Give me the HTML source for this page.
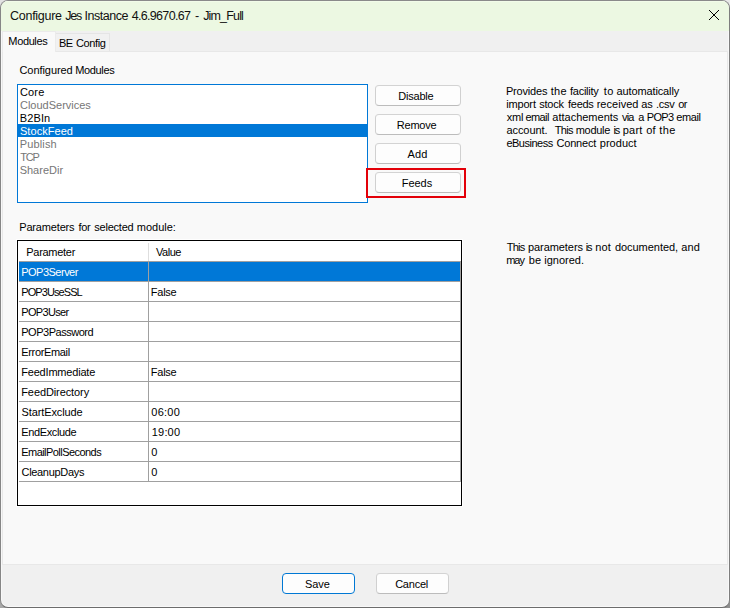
<!DOCTYPE html>
<html><head><meta charset="utf-8"><title>Configure Jes Instance</title>
<style>
html,body{margin:0;padding:0}
body{width:730px;height:608px;overflow:hidden;position:relative;background:linear-gradient(to bottom,#e6e6e6 0,#e6e6e6 304px,#a2a2a2 304px,#a2a2a2 608px);font-family:"Liberation Sans", sans-serif;}
.t{position:absolute;white-space:pre;line-height:14px;font-family:"Liberation Sans", sans-serif;}
.a{position:absolute;box-sizing:border-box}
#win{left:0;top:0;width:730px;height:608px;border:1px solid #8a8a8a;border-color:#8a8a8a #7e7e7e #6c6c6c #868686;box-shadow:inset 0 0 0 1px rgba(255,255,255,.55);border-radius:8px;background:#f0f0f0;overflow:hidden}
#tbar{left:0;top:0;width:728px;height:30px;background:#ecf8e2;border-top:1px solid #f2fce9}
#page{left:2px;top:51px;width:726px;height:514px;background:#f9f9f9;border:1px solid #e8e8e8}
#tabA{left:2px;top:31px;width:54px;height:21px;background:#f9f9f9;border:1px solid #ebebeb;border-bottom:none}
#tabB{left:55px;top:33px;width:55px;height:18px;background:#f1f1f1;border:1px solid #e5e5e5;border-bottom:none}
#list{left:17px;top:84px;width:351px;height:119px;background:#fff;border:1px solid #0078d7}
#sel{left:18px;top:124px;width:349px;height:13px;background:#0078d7}
.btn{width:86px;height:21px;left:375px;background:#fdfdfd;border:1px solid #d0d0d0;border-color:#d3d3d3 #d0d0d0 #bcbcbc #d0d0d0;border-radius:4px}
#red{left:366px;top:168px;width:100px;height:30px;border:2px solid #e30009}
#grid{left:17px;top:240px;width:445px;height:266px;background:#fff;border:1px solid #000;outline:1px solid #fff}
.hl{left:19px;width:442px;height:1px;background:#a0a0a0}
.vl{width:1px;background:#a0a0a0}
#gsel{left:19px;top:262px;width:441px;height:19px;background:#0078d7}
#bsave{left:282px;top:573px;width:73px;height:21px;background:#fdfdfd;border:1px solid #0078d4;border-radius:4px}
#bcancel{left:376px;top:573px;width:73px;height:21px;background:#fdfdfd;border:1px solid #d0d0d0;border-color:#d3d3d3 #d0d0d0 #bcbcbc #d0d0d0;border-radius:4px}
</style></head>
<body>
<div class="a" style="left:0;top:0;width:10px;height:10px;background:#e2e2e2"></div><div class="a" style="left:720px;top:0;width:10px;height:10px;background:#e8e8e8"></div><div class="a" style="left:0;top:598px;width:10px;height:10px;background:#a8a8a8"></div><div class="a" style="left:720px;top:598px;width:10px;height:10px;background:#8e8e8e"></div>
<div id="win" class="a">
<div id="tbar" class="a"></div>
<svg class="a" style="left:706px;top:7px" width="14" height="14" viewBox="0 0 14 14"><path d="M2 2 L12 12 M12 2 L2 12" stroke="#000" stroke-width="1" fill="none"/></svg>
</div>
<div id="page" class="a"></div>
<div id="tabB" class="a"></div>
<div id="tabA" class="a"></div>
<div id="list" class="a"></div>
<div id="sel" class="a"></div>
<div class="a btn" style="top:85px"></div>
<div class="a btn" style="top:114px"></div>
<div class="a btn" style="top:143px"></div>
<div class="a btn" style="top:172px"></div>
<div id="red" class="a"></div>
<div id="grid" class="a"></div>
<div id="gsel" class="a"></div>
<div class="a hl" style="top:261px"></div>
<div class="a hl" style="top:281px"></div>
<div class="a hl" style="top:301px"></div>
<div class="a hl" style="top:321px"></div>
<div class="a hl" style="top:341px"></div>
<div class="a hl" style="top:361px"></div>
<div class="a hl" style="top:381px"></div>
<div class="a hl" style="top:401px"></div>
<div class="a hl" style="top:421px"></div>
<div class="a hl" style="top:441px"></div>
<div class="a hl" style="top:461px"></div>
<div class="a hl" style="top:481px"></div>
<div class="a vl" style="left:148px;top:243px;height:18px;background:#dedede"></div>
<div class="a vl" style="left:148px;top:261px;height:221px"></div>
<div class="a vl" style="left:460px;top:261px;height:221px"></div>
<div id="bsave" class="a"></div>
<div id="bcancel" class="a"></div>
<span class="t" style="left:8.35px;top:34.00px;font-size:11px;letter-spacing:-0.372px;word-spacing:0.4px;color:#000">Modules</span>
<span class="t" style="left:58.90px;top:36.00px;font-size:11px;letter-spacing:-0.356px;word-spacing:0.4px;color:#000">BE Config</span>
<span class="t" style="left:19.95px;top:85.00px;font-size:11px;letter-spacing:0.158px;word-spacing:0.4px;color:#000">Core</span>
<span class="t" style="left:19.95px;top:98.00px;font-size:11px;letter-spacing:0.000px;word-spacing:0.4px;color:#767676">CloudServices</span>
<span class="t" style="left:19.80px;top:111.00px;font-size:11px;letter-spacing:0.119px;word-spacing:0.4px;color:#000">B2BIn</span>
<span class="t" style="left:19.95px;top:124.00px;font-size:11px;letter-spacing:0.059px;word-spacing:0.4px;color:#fff">StockFeed</span>
<span class="t" style="left:19.80px;top:137.00px;font-size:11px;letter-spacing:0.127px;word-spacing:0.4px;color:#767676">Publish</span>
<span class="t" style="left:20.15px;top:150.00px;font-size:11px;letter-spacing:-1.200px;word-spacing:0.4px;color:#767676">TCP</span>
<span class="t" style="left:19.65px;top:163.00px;font-size:11px;letter-spacing:0.014px;word-spacing:0.4px;color:#767676">ShareDir</span>
<span class="t" style="left:398.35px;top:89.00px;font-size:11px;letter-spacing:-0.237px;word-spacing:0.4px;color:#000">Disable</span>
<span class="t" style="left:396.80px;top:118.00px;font-size:11px;letter-spacing:-0.237px;word-spacing:0.4px;color:#000">Remove</span>
<span class="t" style="left:407.60px;top:147.00px;font-size:11px;letter-spacing:0.119px;word-spacing:0.4px;color:#000">Add</span>
<span class="t" style="left:401.75px;top:176.00px;font-size:11px;letter-spacing:-0.036px;word-spacing:0.4px;color:#000">Feeds</span>
<span class="t" style="left:26.25px;top:245.00px;font-size:11px;letter-spacing:-0.285px;word-spacing:0.4px;color:#000">Parameter</span>
<span class="t" style="left:156.00px;top:245.00px;font-size:11px;letter-spacing:-0.475px;word-spacing:0.4px;color:#000">Value</span>
<span class="t" style="left:304.95px;top:577.00px;font-size:11px;letter-spacing:-0.079px;word-spacing:0.4px;color:#000">Save</span>
<span class="t" style="left:395.15px;top:577.00px;font-size:11px;letter-spacing:-0.218px;word-spacing:0.4px;color:#000">Cancel</span>
<span class="t" style="left:21.25px;top:265.00px;font-size:11px;letter-spacing:-0.512px;word-spacing:0.4px;color:#fff">POP3Server</span>
<span class="t" style="left:21.25px;top:285.00px;font-size:11px;letter-spacing:-0.918px;word-spacing:0.4px;color:#000">POP3UseSSL</span>
<span class="t" style="left:150.80px;top:285.00px;font-size:11px;letter-spacing:-0.249px;word-spacing:0.4px;color:#000">False</span>
<span class="t" style="left:21.25px;top:305.00px;font-size:11px;letter-spacing:-0.679px;word-spacing:0.4px;color:#000">POP3User</span>
<span class="t" style="left:21.25px;top:325.00px;font-size:11px;letter-spacing:-0.475px;word-spacing:0.4px;color:#000">POP3Password</span>
<span class="t" style="left:21.25px;top:345.00px;font-size:11px;letter-spacing:-0.338px;word-spacing:0.4px;color:#000">ErrorEmail</span>
<span class="t" style="left:21.25px;top:365.00px;font-size:11px;letter-spacing:-0.198px;word-spacing:0.4px;color:#000">FeedImmediate</span>
<span class="t" style="left:150.80px;top:365.00px;font-size:11px;letter-spacing:-0.249px;word-spacing:0.4px;color:#000">False</span>
<span class="t" style="left:21.25px;top:385.00px;font-size:11px;letter-spacing:-0.099px;word-spacing:0.4px;color:#000">FeedDirectory</span>
<span class="t" style="left:21.50px;top:405.00px;font-size:11px;letter-spacing:-0.104px;word-spacing:0.4px;color:#000">StartExclude</span>
<span class="t" style="left:151.30px;top:405.00px;font-size:11px;letter-spacing:0.261px;word-spacing:0.4px;color:#000">06:00</span>
<span class="t" style="left:21.25px;top:425.00px;font-size:11px;letter-spacing:-0.359px;word-spacing:0.4px;color:#000">EndExclude</span>
<span class="t" style="left:151.80px;top:425.00px;font-size:11px;letter-spacing:0.178px;word-spacing:0.4px;color:#000">19:00</span>
<span class="t" style="left:21.25px;top:445.00px;font-size:11px;letter-spacing:-0.551px;word-spacing:0.4px;color:#000">EmailPollSeconds</span>
<span class="t" style="left:151.30px;top:445.00px;font-size:11px;letter-spacing:0.000px;word-spacing:0.4px;color:#000">0</span>
<span class="t" style="left:21.50px;top:465.00px;font-size:11px;letter-spacing:-0.313px;word-spacing:0.4px;color:#000">CleanupDays</span>
<span class="t" style="left:151.30px;top:465.00px;font-size:11px;letter-spacing:0.000px;word-spacing:0.4px;color:#000">0</span>
<span class="t" style="left:10.00px;top:9.00px;font-size:12.5px;letter-spacing:-0.267px;word-spacing:0.4px;color:#111">Configure </span>
<span class="t" style="left:65.15px;top:9.00px;font-size:12.5px;letter-spacing:-1.200px;word-spacing:0.4px;color:#111">Jes </span>
<span class="t" style="left:84.50px;top:9.00px;font-size:12.5px;letter-spacing:-0.468px;word-spacing:0.4px;color:#111">Instance </span>
<span class="t" style="left:131.65px;top:9.00px;font-size:12.5px;letter-spacing:-0.670px;word-spacing:0.4px;color:#111">4.6.9670.67 </span>
<span class="t" style="left:195.00px;top:9.00px;font-size:12.5px;letter-spacing:0.000px;word-spacing:0.4px;color:#111">- </span>
<span class="t" style="left:203.20px;top:9.00px;font-size:12.5px;letter-spacing:-0.835px;word-spacing:0.4px;color:#111">Jim_Full</span>
<span class="t" style="left:19.45px;top:63.00px;font-size:11px;letter-spacing:-0.058px;word-spacing:0.4px;color:#000">Configured </span>
<span class="t" style="left:75.25px;top:63.00px;font-size:11px;letter-spacing:-0.348px;word-spacing:0.4px;color:#000">Modules</span>
<span class="t" style="left:505.90px;top:84.00px;font-size:11px;letter-spacing:-0.183px;word-spacing:0.4px;color:#000">Provides </span>
<span class="t" style="left:550.75px;top:84.00px;font-size:11px;letter-spacing:0.309px;word-spacing:0.4px;color:#000">the </span>
<span class="t" style="left:570.05px;top:84.00px;font-size:11px;letter-spacing:-0.271px;word-spacing:0.4px;color:#000">facility </span>
<span class="t" style="left:603.75px;top:84.00px;font-size:11px;letter-spacing:0.332px;word-spacing:0.4px;color:#000">to </span>
<span class="t" style="left:616.45px;top:84.00px;font-size:11px;letter-spacing:-0.115px;word-spacing:0.4px;color:#000">automatically</span>
<span class="t" style="left:506.15px;top:97.00px;font-size:11px;letter-spacing:-0.152px;word-spacing:0.4px;color:#000">import </span>
<span class="t" style="left:539.25px;top:97.00px;font-size:11px;letter-spacing:-0.237px;word-spacing:0.4px;color:#000">stock </span>
<span class="t" style="left:568.10px;top:97.00px;font-size:11px;letter-spacing:-0.285px;word-spacing:0.4px;color:#000">feeds </span>
<span class="t" style="left:596.65px;top:97.00px;font-size:11px;letter-spacing:0.034px;word-spacing:0.4px;color:#000">received </span>
<span class="t" style="left:641.35px;top:97.00px;font-size:11px;letter-spacing:-0.285px;word-spacing:0.4px;color:#000">as </span>
<span class="t" style="left:656.05px;top:97.00px;font-size:11px;letter-spacing:-0.317px;word-spacing:0.4px;color:#000">.csv </span>
<span class="t" style="left:678.30px;top:97.00px;font-size:11px;letter-spacing:-0.618px;word-spacing:0.4px;color:#000">or</span>
<span class="t" style="left:506.65px;top:110.00px;font-size:11px;letter-spacing:-0.190px;word-spacing:0.4px;color:#000">xml </span>
<span class="t" style="left:525.45px;top:110.00px;font-size:11px;letter-spacing:-0.582px;word-spacing:0.4px;color:#000">email </span>
<span class="t" style="left:552.35px;top:110.00px;font-size:11px;letter-spacing:-0.009px;word-spacing:0.4px;color:#000">attachements </span>
<span class="t" style="left:622.05px;top:110.00px;font-size:11px;letter-spacing:-0.808px;word-spacing:0.4px;color:#000">via </span>
<span class="t" style="left:638.35px;top:110.00px;font-size:11px;letter-spacing:0.000px;word-spacing:0.4px;color:#000">a </span>
<span class="t" style="left:646.85px;top:110.00px;font-size:11px;letter-spacing:-0.712px;word-spacing:0.4px;color:#000">POP3 </span>
<span class="t" style="left:676.35px;top:110.00px;font-size:11px;letter-spacing:-0.428px;word-spacing:0.4px;color:#000">email</span>
<span class="t" style="left:506.40px;top:123.00px;font-size:11px;letter-spacing:-0.054px;word-spacing:0.4px;color:#000">account. </span>
<span class="t" style="left:554.70px;top:123.00px;font-size:11px;letter-spacing:-0.665px;word-spacing:0.4px;color:#000">This </span>
<span class="t" style="left:575.70px;top:123.00px;font-size:11px;letter-spacing:-0.285px;word-spacing:0.4px;color:#000">module </span>
<span class="t" style="left:613.60px;top:123.00px;font-size:11px;letter-spacing:-1.200px;word-spacing:0.4px;color:#000">is </span>
<span class="t" style="left:622.75px;top:123.00px;font-size:11px;letter-spacing:0.237px;word-spacing:0.4px;color:#000">part </span>
<span class="t" style="left:646.30px;top:123.00px;font-size:11px;letter-spacing:0.190px;word-spacing:0.4px;color:#000">of </span>
<span class="t" style="left:659.20px;top:123.00px;font-size:11px;letter-spacing:0.451px;word-spacing:0.4px;color:#000">the</span>
<span class="t" style="left:506.40px;top:136.00px;font-size:11px;letter-spacing:-0.487px;word-spacing:0.4px;color:#000">eBusiness </span>
<span class="t" style="left:556.50px;top:136.00px;font-size:11px;letter-spacing:-0.190px;word-spacing:0.4px;color:#000">Connect </span>
<span class="t" style="left:599.75px;top:136.00px;font-size:11px;letter-spacing:0.032px;word-spacing:0.4px;color:#000">product</span>
<span class="t" style="left:19.25px;top:220.00px;font-size:11px;letter-spacing:-0.169px;word-spacing:0.4px;color:#000">Parameters </span>
<span class="t" style="left:78.60px;top:220.00px;font-size:11px;letter-spacing:-0.356px;word-spacing:0.4px;color:#000">for </span>
<span class="t" style="left:94.30px;top:220.00px;font-size:11px;letter-spacing:-0.231px;word-spacing:0.4px;color:#000">selected </span>
<span class="t" style="left:136.75px;top:220.00px;font-size:11px;letter-spacing:0.000px;word-spacing:0.4px;color:#000">module:</span>
<span class="t" style="left:506.65px;top:240.00px;font-size:11px;letter-spacing:-0.728px;word-spacing:0.4px;color:#000">This </span>
<span class="t" style="left:528.05px;top:240.00px;font-size:11px;letter-spacing:-0.079px;word-spacing:0.4px;color:#000">parameters </span>
<span class="t" style="left:585.80px;top:240.00px;font-size:11px;letter-spacing:-1.200px;word-spacing:0.4px;color:#000">is </span>
<span class="t" style="left:595.25px;top:240.00px;font-size:11px;letter-spacing:0.166px;word-spacing:0.4px;color:#000">not </span>
<span class="t" style="left:614.90px;top:240.00px;font-size:11px;letter-spacing:-0.038px;word-spacing:0.4px;color:#000">documented, </span>
<span class="t" style="left:681.30px;top:240.00px;font-size:11px;letter-spacing:0.095px;word-spacing:0.4px;color:#000">and</span>
<span class="t" style="left:506.15px;top:253.00px;font-size:11px;letter-spacing:-0.974px;word-spacing:0.4px;color:#000">may </span>
<span class="t" style="left:528.70px;top:253.00px;font-size:11px;letter-spacing:0.095px;word-spacing:0.4px;color:#000">be </span>
<span class="t" style="left:544.20px;top:253.00px;font-size:11px;letter-spacing:0.014px;word-spacing:0.4px;color:#000">ignored.</span>
</body></html>
